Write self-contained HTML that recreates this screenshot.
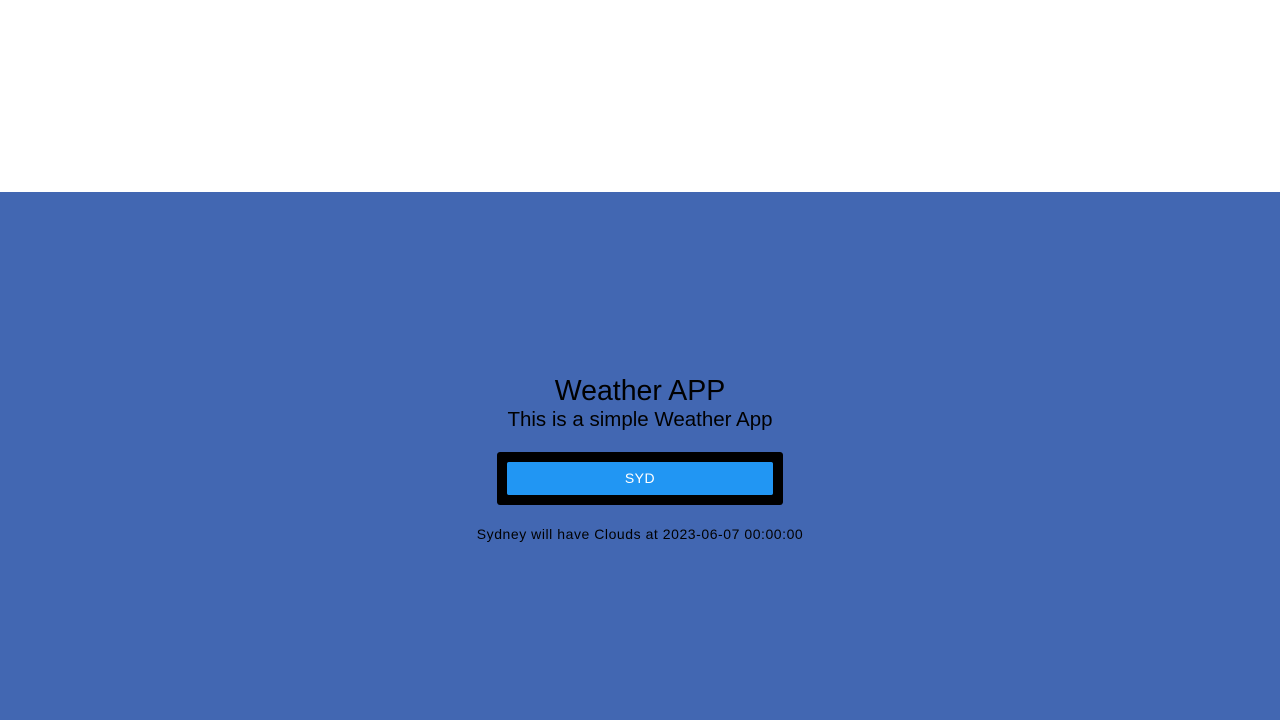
<!DOCTYPE html>
<html><head><style>
body{margin:0;width:1280px;height:720px;background:#fff;font-family:"Liberation Sans",sans-serif;overflow:hidden;position:relative}
.blue{position:absolute;top:192px;left:0;width:1280px;height:528px;background:#4267b2}
.t{position:absolute;left:0;width:1280px;text-align:center;color:#000}
.box{position:absolute;left:497px;top:452px;width:286px;height:53px;background:#000;border-radius:3px}
.btn{position:absolute;left:10px;top:10px;width:266px;height:33px;background:#2196f3;border-radius:2px;color:#fff;font-size:14px;line-height:33px;text-align:center;letter-spacing:0.5px}
</style></head><body>
<div class="blue"></div>
<div class="t" style="top:374px;font-size:28.5px;line-height:34px">Weather APP</div>
<div class="t" style="top:408px;font-size:20.5px;line-height:24px">This is a simple Weather App</div>
<div class="box"><div class="btn">SYD</div></div>
<div class="t" style="top:525px;font-size:14px;line-height:18px;letter-spacing:0.55px">Sydney will have Clouds at 2023-06-07 00:00:00</div>
</body></html>
